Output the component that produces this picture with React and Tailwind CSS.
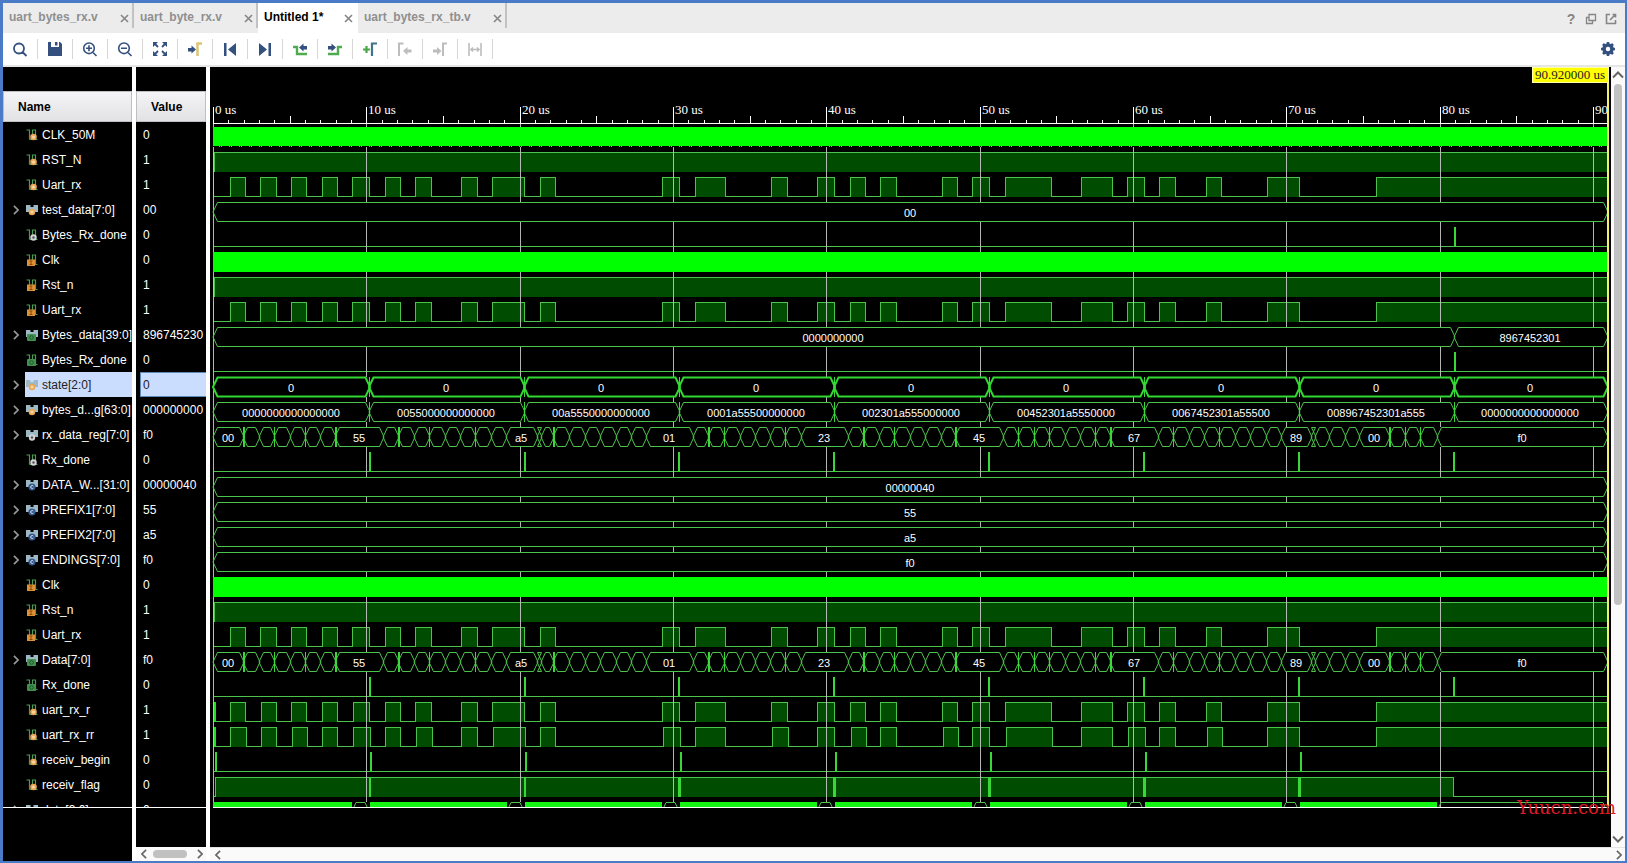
import { useState } from "react";

const NAVY = "#34507f";
const GREEN = "#4cc44c";
const WAVE_END = 1607;

const TABS = [
  { name: "uart_bytes_rx.v", width: "w-[131px]" },
  { name: "uart_byte_rx.v", width: "w-[124px]" },
  { name: "Untitled 1*", width: "w-[100px]", active: true },
  { name: "uart_bytes_rx_tb.v", width: "w-[149px]" },
];

// Serial line: [rise, fall] pairs
const RX = [
  [230, 245], [260, 276], [291, 306], [322, 337], [352, 369], [385, 400], [415, 431],
  [461, 477], [492, 524], [540, 555], [662, 679], [695, 725], [771, 787], [817, 834],
  [850, 865], [880, 896], [942, 957], [972, 989], [1005, 1051], [1081, 1112],
  [1127, 1144], [1159, 1175], [1206, 1221], [1267, 1299], [1376, WAVE_END],
];
const RX_R = RX.map(([a, b]) => [a === 260 || a === 352 ? a + 1 : a, b]);
const RX_RR = RX.map(([a, b], i) => [i % 2 ? a + (a === 260 ? 1 : 0) : a + (i > 0 && i < 24 ? 1 : 0), i % 2 || i > 22 ? b : b + 1]);

// Byte register: [x, transition weight, label of the segment that starts here]
const SHIFT = [
  [213, 0, "00"], [243, 2], [259, 0], [274, 1], [290, 0], [305, 1], [320, 0],
  [335, 2, "55"], [383, 0], [398, 2], [414, 0], [429, 1], [445, 0], [460, 0], [475, 1], [491, 0],
  [506, 0, "a5"], [537, 0], [541, 0], [553, 2], [569, 0], [585, 0], [600, 0], [616, 0], [631, 0],
  [646, 0, "01"], [693, 0], [708, 2], [724, 1], [740, 0], [755, 0], [770, 0], [785, 1],
  [801, 0, "23"], [848, 0], [863, 2], [879, 0], [894, 1], [910, 0], [925, 0], [941, 0],
  [955, 2, "45"], [1003, 0], [1018, 1], [1034, 1], [1049, 1], [1065, 0], [1080, 0], [1095, 1],
  [1110, 2, "67"], [1158, 0], [1173, 1], [1189, 0], [1204, 0], [1219, 1], [1235, 0], [1250, 0], [1266, 0],
  [1281, 0, "89"], [1311, 0], [1315, 0], [1329, 0], [1345, 0],
  [1359, 0, "00"], [1389, 2], [1405, 1], [1420, 1],
  [1437, 0, "f0"], [WAVE_END, 0],
];

const FRAMES = [213, 369, 524, 679, 834, 989, 1144, 1299, 1454, WAVE_END];
const PACKETS = [
  "0000000000000000", "0055000000000000", "00a5550000000000", "0001a55500000000",
  "002301a555000000", "00452301a5550000", "0067452301a55500", "008967452301a555",
  "0000000000000000",
];

const frameBus = (labels) =>
  FRAMES.map((x, i) => [x, i === 0 || i === 9 ? 0 : 1, labels[i]]);
const constant = (label) => [[213, 0, label], [WAVE_END, 0]];
const DONE = [369, 524, 678, 833, 988, 1143, 1298, 1453];

const SIGNALS = [
  { name: "CLK_50M", value: "0", badge: "reg", clock: true, dotted: true },
  { name: "RST_N", value: "1", badge: "reg", bits: [[214, WAVE_END]], start: 1 },
  { name: "Uart_rx", value: "1", badge: "reg", bits: RX, start: 1 },
  { name: "test_data[7:0]", value: "00", badge: "reg", bus: constant("00") },
  { name: "Bytes_Rx_done", value: "0", badge: "wire", bits: [], pulses: [1454] },
  { name: "Clk", value: "0", badge: "in", clock: true },
  { name: "Rst_n", value: "1", badge: "in", bits: [[214, WAVE_END]], start: 1 },
  { name: "Uart_rx", value: "1", badge: "in", bits: RX, start: 1 },
  { name: "Bytes_data[39:0]", value: "896745230", badge: "out", bus: [[213, 0, "0000000000"], [1454, 0, "8967452301"], [WAVE_END, 0]] },
  { name: "Bytes_Rx_done", value: "0", badge: "out", bits: [], pulses: [1454] },
  { name: "state[2:0]", value: "0", badge: "reg", bus: frameBus(Array(9).fill("0")), bold: true },
  { name: "bytes_d...g[63:0]", value: "000000000", badge: "reg", bus: frameBus(PACKETS) },
  { name: "rx_data_reg[7:0]", value: "f0", badge: "wire", bus: SHIFT },
  { name: "Rx_done", value: "0", badge: "wire", bits: [], pulses: DONE },
  { name: "DATA_W...[31:0]", value: "00000040", badge: "const", bus: constant("00000040") },
  { name: "PREFIX1[7:0]", value: "55", badge: "const", bus: constant("55") },
  { name: "PREFIX2[7:0]", value: "a5", badge: "const", bus: constant("a5") },
  { name: "ENDINGS[7:0]", value: "f0", badge: "const", bus: constant("f0") },
  { name: "Clk", value: "0", badge: "in", clock: true },
  { name: "Rst_n", value: "1", badge: "in", bits: [[214, WAVE_END]], start: 1 },
  { name: "Uart_rx", value: "1", badge: "in", bits: RX, start: 1 },
  { name: "Data[7:0]", value: "f0", badge: "out", bus: SHIFT },
  { name: "Rx_done", value: "0", badge: "out", bits: [], pulses: DONE },
  { name: "uart_rx_r", value: "1", badge: "reg", bits: RX_R, start: 3 },
  { name: "uart_rx_rr", value: "1", badge: "reg", bits: RX_RR, start: 3 },
  { name: "receiv_begin", value: "0", badge: "reg", bits: [], pulses: [215, 370, 525, 680, 835, 990, 1145, 1300] },
  { name: "receiv_flag", value: "0", badge: "reg", bits: [[215, 1453]], pulses: [369, 524, 678, 679, 833, 834, 988, 989, 1143, 1144, 1298, 1299] },
  { name: "data[3:0]", value: "0", badge: "reg", counter: true, bus: [] },
];

const SignalIcon = ({ badge, bus }) => (
  <svg width="12" height="12" viewBox="0 0 12 12" className="shrink-0">
    {bus ? (
      <path d="M0 1H4.5V3H7.500V1H12V8H0Z" fill="#9db9c6" />
    ) : (
      <path d="M0.500 1H3.500V10.500M3.500 10.500H6.500V1H9.500V10.500H11.500" fill="none" stroke="#4c9a55" strokeWidth="1.200" />
    )}
    {badge === "reg" && (
      <>
        <circle cx={bus ? 6 : 7.5} cy="8" r="3.300" fill="#e9a657" />
        <circle cx={bus ? 6 : 7.5} cy="8" r="1.600" fill="#f9d7a0" />
      </>
    )}
    {badge === "wire" && (
      <>
        <circle cx={bus ? 6 : 7.5} cy="8.500" r="3.200" fill="#d2d2d2" />
        <circle cx={bus ? 6 : 7.5} cy="8.500" r="1.200" fill="#555" />
      </>
    )}
    {badge === "const" && (
      <>
        <circle cx="6" cy="8" r="3.600" fill="#34588c" />
        <path d="M7.300 7A1.500 1.500 0 1 0 7.300 9" fill="none" stroke="#d5e2f4" />
      </>
    )}
    {badge === "in" && (
      <>
        <rect x="1" y="5.500" width="8" height="6.500" fill="#dd9238" />
        <path d="M3.500 7H6.500M3.500 10.500H6.500M5 7V10.500" stroke="#8a4a0c" />
      </>
    )}
    {badge === "out" && (
      <>
        <rect x="1" y="5" width="9" height="7" rx="1" fill="#439150" />
        <circle cx="5.500" cy="8.500" r="1.800" fill="none" stroke="#1d5a29" />
      </>
    )}
  </svg>
);

const TOOLS = [
  { label: "Find", icon: <path d="M10.500 11L14.500 15M7 2.500A5 5 0 1 1 7 12.500A5 5 0 1 1 7 2.500Z" fill="none" stroke={NAVY} strokeWidth="1.800" /> },
  { label: "Save", icon: <path d="M1 1H4V6H12V1H13L15 3V15H1ZM8 1H10.500V4.500H8Z" fill={NAVY} /> },
  { label: "Zoom in", icon: <path d="M10.500 11L14.500 15M7 2A5.300 5.300 0 1 1 7 12.600A5.300 5.300 0 1 1 7 2ZM4 7.300H10M7 4.300V10.300" fill="none" stroke={NAVY} strokeWidth="1.600" /> },
  { label: "Zoom out", icon: <path d="M10.500 11L14.500 15M7 2A5.300 5.300 0 1 1 7 12.600A5.300 5.300 0 1 1 7 2ZM4 7.300H10" fill="none" stroke={NAVY} strokeWidth="1.600" /> },
  {
    label: "Zoom fit",
    icon: (
      <>
        <path d="M1 1H6L1 6ZM15 1V6L10 1ZM1 15V10L6 15ZM15 15H10L15 10Z" fill={NAVY} />
        <path d="M2 2L6 6M14 2L10 6M2 14L6 10M14 14L10 10" stroke={NAVY} strokeWidth="1.800" />
      </>
    ),
  },
  {
    label: "Go to cursor",
    icon: (
      <>
        <path d="M1 7H4.500V4.500L9 8.500L4.500 12.500V10.500H1Z" fill={NAVY} />
        <path d="M10.500 15V2.500H15" fill="none" stroke="#dcc474" strokeWidth="2.500" />
      </>
    ),
  },
  { label: "Go to start", icon: <path d="M2 2H4.500V15H2ZM14 2V15L6 8.500Z" fill={NAVY} /> },
  { label: "Go to end", icon: <path d="M2 2L10 8.500L2 15ZM11.500 2H14V15H11.500Z" fill={NAVY} /> },
  {
    label: "Previous transition",
    icon: (
      <>
        <path d="M1 6H5V13H15" fill="none" stroke="#50ab50" strokeWidth="2.400" />
        <path d="M15 5H11.500V2.500L7 6.500L11.500 10.500V8.500H15Z" fill={NAVY} />
      </>
    ),
  },
  {
    label: "Next transition",
    icon: (
      <>
        <path d="M1 13H11V6H15" fill="none" stroke="#50ab50" strokeWidth="2.400" />
        <path d="M1 5H4.500V2.500L9 6.500L4.500 10.500V8.500H1Z" fill={NAVY} />
      </>
    ),
  },
  {
    label: "Add marker",
    icon: (
      <>
        <path d="M1 8.500H8M4.500 5V12" stroke="#46a846" strokeWidth="2.200" />
        <path d="M10 15V2.500H15" fill="none" stroke="#3e7389" strokeWidth="2.200" />
      </>
    ),
  },
  {
    label: "Previous marker",
    disabled: true,
    icon: (
      <>
        <path d="M2 15V2.500H6.500" fill="none" stroke="#bdbdbd" strokeWidth="2" />
        <path d="M14.500 8.500H10.500V6L6 10L10.500 14V11.500H14.500Z" fill="#bdbdbd" />
      </>
    ),
  },
  {
    label: "Next marker",
    disabled: true,
    icon: (
      <>
        <path d="M11 15V2.500H15" fill="none" stroke="#bdbdbd" strokeWidth="2" />
        <path d="M1 8.500H5V6L9.500 10L5 14V11.500H1Z" fill="#bdbdbd" />
      </>
    ),
  },
  {
    label: "Swap cursors",
    disabled: true,
    icon: <path d="M2 2V15M14 2V15M4 8.500H12M6 6.500L4 8.500L6 10.500M10 6.500L12 8.500L10 10.500" fill="none" stroke="#bdbdbd" strokeWidth="1.600" />,
  },
];

const Chevron = ({ d, size = 12, color = "#666" }) => (
  <svg width={size} height={size} viewBox="0 0 12 12" className="shrink-0">
    <path d={d} fill="none" stroke={color} strokeWidth="2" />
  </svg>
);

const LEFT = "M8.500 1L3.500 6L8.500 11";
const RIGHT = "M3.500 1L8.500 6L3.500 11";
const UP = "M1 8.500L6 3.500L11 8.500";
const DOWN = "M1 3.500L6 8.500L11 3.500";

const bitPath = (bits, start, y) => {
  let d = `M213.5 ${y + 19.5}`;
  if (start === 1) d = `M213.5 ${y}V${y + 19.5}`;
  bits.forEach(([a, b]) => {
    d += `H${a + 0.5}V${y + 0.5}H${b === WAVE_END ? b : b + 0.5}`;
    if (b !== WAVE_END) d += `V${y + 19.5}`;
  });
  const last = bits[bits.length - 1];
  return last && last[1] === WAVE_END ? d : `${d}H${WAVE_END}`;
};

const BusRow = ({ points, y, bold }) => (
  <g>
    <rect x="214" y={y} width="1393" height="20" fill="#000" />
    {points.slice(0, -1).map(([x, , label], i) => {
      const end = points[i + 1][0];
      const left = x + 4.5;
      const right = end - 3.5;
      return (
        <g key={x}>
          <path
            d={`M${x} ${y + 10}L${left} ${y + 0.5}H${right}L${end + 1} ${y + 10}L${right} ${y + 19.5}H${left}Z`}
            fill="none"
            stroke={bold ? "#32d832" : GREEN}
            strokeWidth={bold ? 2 : 1}
          />
          {label && (
            <text x={Math.floor((x + end) / 2)} y={y + 15} textAnchor="middle" fill="#fff">
              {label}
            </text>
          )}
        </g>
      );
    })}
    {points.map(([x, weight]) =>
      weight > 0 ? <rect key={x} x={x} y={y} width={weight} height="20" fill="#3ad83a" /> : null
    )}
  </g>
);

const Waveform = () => {
  const rowY = (i) => 127 + 25 * i;
  const ticks = Array.from({ length: 91 }, (_, t) => ({ t, x: Math.round(213 + t * 15.335) }));
  const majors = ticks.filter(({ t }) => t % 10 === 0);

  return (
    <svg width="1401" height="740" viewBox="210 67 1401 740" className="block font-['Liberation_Sans',sans-serif] text-[11px]">
      {/* Single-bit signals */}
      {SIGNALS.map((sig, i) =>
        sig.bits ? (
          <g key={i} shapeRendering="crispEdges">
            {sig.bits.map(([a, b]) => (
              <rect key={a} x={a} y={rowY(i)} width={b - a} height="20" fill="#004c00" />
            ))}
            <path d={bitPath(sig.bits, sig.start, rowY(i))} fill="none" stroke={GREEN} />
            {sig.start === 3 && <rect x="213" y={rowY(i)} width="3" height="20" fill="#22e022" />}
            {(sig.pulses || []).map((x) => (
              <rect key={x} x={x} y={rowY(i)} width="2" height="20" fill="#38d838" />
            ))}
          </g>
        ) : null
      )}

      {/* Time grid */}
      {majors.map(({ t, x }) => (
        <rect key={t} x={x} y="124" width="1" height="683" fill="#c8c8c8" fillOpacity="0.9" />
      ))}

      {/* Clocks and buses cover the grid */}
      {SIGNALS.map((sig, i) => {
        const y = rowY(i);
        if (sig.clock) {
          return (
            <g key={i}>
              <rect x="213" y={y} width="1394" height="20" fill={sig.dotted ? "#000" : "#00ff00"} />
              {sig.dotted && (
                <>
                  <rect x="213" y={y} width="1394" height="19" fill="#00ff00" />
                  <path d={`M219 ${y + 19.5}H1607`} stroke={GREEN} strokeDasharray="1 1 1 7" />
                </>
              )}
            </g>
          );
        }
        if (sig.counter) {
          return (
            <g key={i}>
              <rect x="213" y={y} width="1224" height="20" fill="#14f514" />
              {FRAMES.slice(1, 8).map((x) => (
                <g key={x}>
                  <rect x={x - 17} y={y} width="18" height="20" fill="#000" />
                  <path d={`M${x - 16} ${y + 7}L${x - 13} ${y + 0.5}H${x - 4}L${x - 1} ${y + 7}`} fill="none" stroke={GREEN} />
                </g>
              ))}
              <path d={`M1438 ${y + 7}L1441 ${y + 0.5}H1603L1606 ${y + 7}`} fill="none" stroke={GREEN} />
            </g>
          );
        }
        return sig.bus ? <BusRow key={i} points={sig.bus} y={y} bold={sig.bold} /> : null;
      })}

      {/* Ruler */}
      <rect x="213" y="123" width="1394" height="1" fill="#fff" />
      {ticks.map(({ t, x }) => {
        const h = t % 10 === 0 ? 17 : t % 5 === 0 ? 8 : 4;
        return <rect key={t} x={x} y={124 - h} width="1" height={h} fill="#fff" />;
      })}
      <g className="font-['Liberation_Serif',serif] text-[13px]">
        {majors.map(({ t, x }) => (
          <text key={t} x={x + 2} y="114" fill="#fff">
            {t === 90 ? "90" : `${t} us`}
          </text>
        ))}
        <rect x="1607" y="82" width="2" height="725" fill="#f5f06a" />
        <rect x="1532" y="67" width="77" height="16" fill="#ffffa8" />
        <rect x="1533" y="68" width="75" height="14" fill="#ffff00" />
        <text x="1535" y="79" fill="#222">90.920000 us</text>
      </g>
    </svg>
  );
};

const headCell =
  "h-[31px] border border-[#bfbfc3] bg-linear-to-b from-[#f4f4f6] to-[#e2e2e5] text-left text-xs font-bold text-black";

export default function App() {
  const [selected, setSelected] = useState(10);

  return (
    <div className="flex h-screen flex-col overflow-hidden border-t-3 border-r-2 border-b-2 border-l-3 border-[#4a7bc6] bg-white font-['Liberation_Sans',Arial,sans-serif] text-xs">
      {/* File tabs */}
      <div className="flex h-[30px] shrink-0 justify-between bg-[#ececec]">
        <div className="flex" role="tablist">
          {TABS.map((tab) => (
            <div
              key={tab.name}
              className={`flex items-center justify-between pl-[6px] ${tab.width} ${
                tab.active ? "h-[30px] bg-white pr-[5px] pb-[2px]" : "h-[25px] border-r-2 border-[#c2c2c2] pt-[3px] pr-[3px]"
              }`}
            >
              <button role="tab" aria-selected={!!tab.active} className={`font-bold ${tab.active ? "text-black" : "text-[#8f8f8f]"}`}>
                {tab.name}
              </button>
              <button aria-label={`Close ${tab.name}`} className="pt-[2px]">
                <svg width="9" height="9" viewBox="0 0 9 9">
                  <path d="M1 1L8 8M8 1L1 8" stroke="#858585" strokeWidth="1.600" />
                </svg>
              </button>
            </div>
          ))}
        </div>
        <div className="flex items-center gap-2 pt-[2px] pr-2">
          <button aria-label="Help" className="w-3 text-sm leading-4 font-bold text-[#858585]">?</button>
          <button aria-label="Restore">
            <svg width="12" height="12" viewBox="0 0 12 12" fill="none" stroke="#858585" strokeWidth="1.300">
              <path d="M4 1.500H10.500V7.500H4ZM4 4.500H1.500V10.500H7.500V7.500" />
            </svg>
          </button>
          <button aria-label="Float">
            <svg width="12" height="12" viewBox="0 0 12 12" fill="none" stroke="#858585" strokeWidth="1.600">
              <path d="M5 1.500H1.500V10.500H10.500V7M5 7L10 2M7.500 1.500H10.500V4.500" />
            </svg>
          </button>
        </div>
      </div>

      {/* Toolbar */}
      <div className="flex h-[34px] shrink-0 items-center justify-between border-b-2 border-[#e6e6e6] pr-[9px]">
        <div className="flex items-center">
          {TOOLS.map((tool) => (
            <button
              key={tool.label}
              aria-label={tool.label}
              disabled={tool.disabled}
              className="flex h-5 w-[35px] items-center justify-center border-r border-[#d6d6d6]"
            >
              <svg width="16" height="16" viewBox="0 0 16 16">{tool.icon}</svg>
            </button>
          ))}
        </div>
        <button aria-label="Settings">
          <svg width="16" height="16" viewBox="0 0 16 16">
            <circle cx="8" cy="8" r="4" fill="none" stroke={NAVY} strokeWidth="3.600" />
            <path
              d="M8 1V3M8 13V15M1 8H3M13 8H15M3 3L4.500 4.500M11.500 11.500L13 13M13 3L11.500 4.500M4.500 11.500L3 13"
              stroke={NAVY}
              strokeWidth="2.600"
            />
          </svg>
        </button>
      </div>

      <div className="flex min-h-0 flex-1">
        {/* Names */}
        <div className="mr-1 flex w-[129px] shrink-0 flex-col bg-black">
          <div className="min-h-0 flex-1 overflow-hidden pt-6">
            <table className="w-full table-fixed border-separate border-spacing-0">
              <thead>
                <tr>
                  <th className={`${headCell} pl-[14px]`}>Name</th>
                </tr>
              </thead>
              <tbody>
                {SIGNALS.map((sig, i) => (
                  <tr key={i} onClick={() => setSelected(i)}>
                    <td className="h-[25px] overflow-hidden p-0">
                      <div className="flex h-[25px] items-center">
                        <span className="flex w-[22px] shrink-0 justify-end pr-1">
                          {sig.bus && <Chevron d={RIGHT} size={10} color="#999" />}
                        </span>
                        <span
                          className={`flex h-[25px] flex-1 items-center gap-1 pl-px whitespace-nowrap ${
                            i === selected ? "bg-[#cbddff] text-[#222]" : "text-white"
                          }`}
                        >
                          <SignalIcon badge={sig.badge} bus={!!sig.bus} />
                          {sig.name}
                        </span>
                      </div>
                    </td>
                  </tr>
                ))}
              </tbody>
            </table>
          </div>
          <div className="h-[54px] shrink-0 border-t border-white" />
        </div>

        {/* Values */}
        <div className="mr-1 flex w-[70px] shrink-0 flex-col bg-black">
          <div className="min-h-0 flex-1 overflow-hidden pt-6">
            <table className="w-full table-fixed border-separate border-spacing-0">
              <thead>
                <tr>
                  <th className={`${headCell} pl-[14px]`}>Value</th>
                </tr>
              </thead>
              <tbody>
                {SIGNALS.map((sig, i) => (
                  <tr key={i} onClick={() => setSelected(i)}>
                    <td className="h-[25px] overflow-hidden p-0 pl-1">
                      <div
                        className={`flex h-[25px] items-center border-y border-l pl-[2px] ${
                          i === selected ? "border-[#5f8ab8] bg-[#cbddff] text-[#222]" : "border-transparent text-white"
                        }`}
                      >
                        {sig.value}
                      </div>
                    </td>
                  </tr>
                ))}
              </tbody>
            </table>
          </div>
          <div className="h-10 shrink-0 border-t border-white" />
          <div className="flex h-[14px] shrink-0 items-center justify-between bg-[#fafafa] pr-px pl-[3px]">
            <Chevron d={LEFT} size={10} />
            <div className="mr-1 h-2 w-[34px] rounded-full bg-[#c1c1c1]" />
            <Chevron d={RIGHT} size={10} />
          </div>
        </div>

        {/* Waves */}
        <div className="relative flex min-w-0 flex-1 flex-col">
          <div className="flex min-h-0 flex-1">
            <div className="flex min-w-0 flex-1 flex-col bg-black">
              <div className="min-h-0 flex-1 overflow-hidden">
                <Waveform />
              </div>
              <div className="mr-[2px] ml-[3px] h-10 shrink-0 border-t border-white" />
            </div>
            <div className="flex w-[14px] shrink-0 flex-col items-center bg-[#fafafa] py-[2px]">
              <Chevron d={UP} />
              <div className="mt-[3px] h-[521px] w-2 rounded-full bg-[#c1c1c1]" />
              <div className="mt-auto flex">
                <Chevron d={DOWN} />
              </div>
            </div>
          </div>
          <div className="flex h-[14px] shrink-0 items-center justify-between border-t border-[#e4e4e4] bg-[#fafafa] pr-px pl-[3px]">
            <Chevron d={LEFT} size={10} />
            <Chevron d={RIGHT} size={10} />
          </div>
          <span className="absolute right-[9px] bottom-[43px] font-['DejaVu_Serif',serif] text-[18px] leading-5 text-[#e01a26]">
            Yuucn.com
          </span>
        </div>
      </div>
    </div>
  );
}
